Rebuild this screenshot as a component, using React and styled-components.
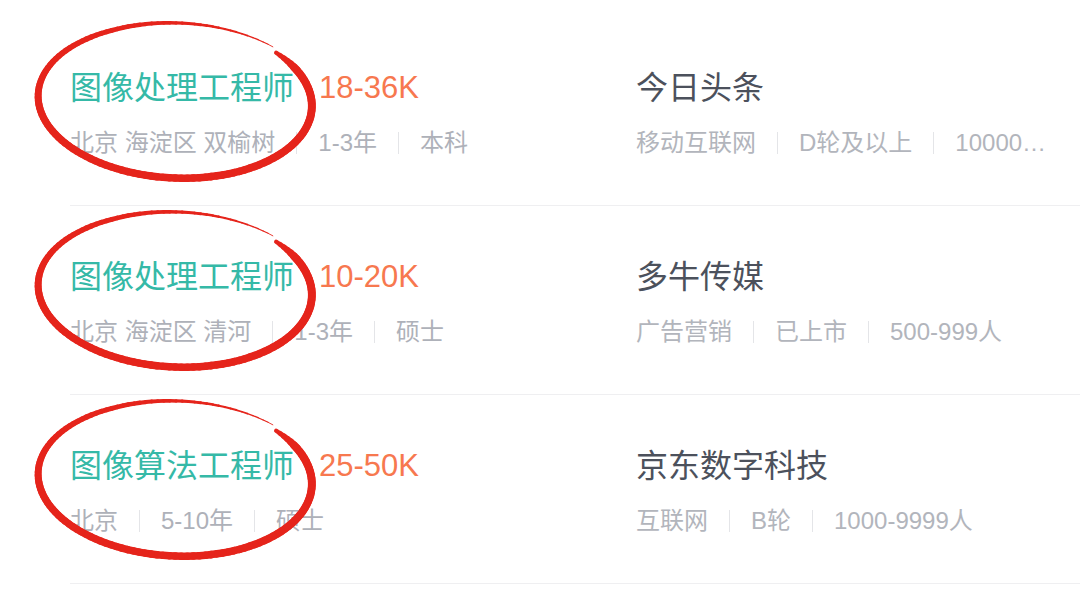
import React from 'react';
import styled, { createGlobalStyle } from 'styled-components';

const GlobalStyle = createGlobalStyle`
  html, body {
    margin: 0;
    padding: 0;
    background: #ffffff;
  }
  body {
    font-family: "Liberation Sans", "Noto Sans CJK SC", sans-serif;
    -webkit-font-smoothing: antialiased;
  }
`;

const Page = styled.div`
  width: 1080px;
  height: 616px;
  overflow: hidden;
  background: #ffffff;
`;

const List = styled.ul`
  list-style: none;
  margin: 17px 0 0;
  padding: 0;
`;

const Row = styled.li`
  position: relative;
  display: flex;
  margin-left: 70px;
  padding: 51px 0 46px;
  border-bottom: 1px solid #efeff1;
`;

const JobCol = styled.div`
  width: 566px;
  display: flex;
  flex-direction: column;
  gap: 19px;
`;

const CompanyCol = styled.div`
  flex: 1;
  display: flex;
  flex-direction: column;
  gap: 19px;
`;

const TitleLine = styled.div`
  display: flex;
  align-items: center;
  gap: 25px;
  height: 40px;
`;

const JobTitle = styled.span`
  font-size: 32px;
  line-height: 40px;
  color: #35b9a7;
`;

const Salary = styled.span`
  font-size: 31px;
  line-height: 40px;
  color: #f7784f;
`;

const CompanyName = styled.span`
  font-size: 32px;
  line-height: 40px;
  color: #4c515c;
`;

const Meta = styled.div`
  display: flex;
  align-items: center;
  height: 32px;
  max-width: ${(p) => (p.$max ? `${p.$max}px` : 'none')};
  font-size: 24px;
  line-height: 32px;
  color: ${(p) => p.$tone || '#aeb1b9'};
  white-space: nowrap;
`;

const MetaItem = styled.span`
  flex: 0 0 auto;

  &:last-child {
    flex: 0 1 auto;
    min-width: 0;
    overflow: hidden;
    text-overflow: ellipsis;
  }
`;

const Sep = styled.span`
  flex: 0 0 auto;
  width: 1px;
  height: 22px;
  margin: 0 21px;
  background: #e4e5e8;
`;

const Mark = styled.svg`
  position: absolute;
  left: -70px;
  top: 0;
  pointer-events: none;
  overflow: visible;
`;

const jobs = [
  {
    title: '图像处理工程师',
    salary: '18-36K',
    meta: ['北京 海淀区 双榆树', '1-3年', '本科'],
    company: '今日头条',
    info: ['移动互联网', 'D轮及以上', '10000人以上'],
  },
  {
    title: '图像处理工程师',
    salary: '10-20K',
    meta: ['北京 海淀区 清河', '1-3年', '硕士'],
    company: '多牛传媒',
    info: ['广告营销', '已上市', '500-999人'],
  },
  {
    title: '图像算法工程师',
    salary: '25-50K',
    meta: ['北京', '5-10年', '硕士'],
    company: '京东数字科技',
    info: ['互联网', 'B轮', '1000-9999人'],
  },
];

// hand drawn red ring: short segments along an ellipse, width tapering at the end
const ringSegments = () => {
  const cx = 175;
  const cy = 84;
  const rx = 137;
  const ry = 77;
  const rot = (3 * Math.PI) / 180;
  const start = (-44 * Math.PI) / 180;
  const sweep = (356 * Math.PI) / 180;
  const steps = 140;
  const width = (t) => {
    if (t < 0.04) return 4 + (t / 0.04) * 4;
    if (t < 0.6) return 8 - (t / 0.6) * 0.8;
    if (t < 0.82) return 7.2 - ((t - 0.6) / 0.22) * 2.6;
    return Math.max(0.8, 4.6 - ((t - 0.82) / 0.18) * 3.8);
  };
  const point = (t) => {
    const a = start + sweep * t;
    const grow = 1 + 0.035 * Math.max(0, (t - 0.8) / 0.2);
    const x0 = rx * grow * Math.cos(a);
    const y0 = ry * grow * Math.sin(a);
    return [
      cx + x0 * Math.cos(rot) - y0 * Math.sin(rot),
      cy + x0 * Math.sin(rot) + y0 * Math.cos(rot),
    ];
  };
  const out = [];
  for (let i = 0; i < steps; i++) {
    const t0 = i / steps;
    const t1 = (i + 1) / steps;
    const [x1, y1] = point(t0);
    const [x2, y2] = point(t1);
    out.push({ x1, y1, x2, y2, w: width((t0 + t1) / 2) });
  }
  return out;
};

const segments = ringSegments();

const Ring = () => (
  <Mark width="360" height="190" viewBox="0 0 360 190">
    {segments.map((s, i) => (
      <line
        key={i}
        x1={s.x1}
        y1={s.y1}
        x2={s.x2}
        y2={s.y2}
        stroke="#e5241b"
        strokeWidth={s.w}
        strokeLinecap="round"
      />
    ))}
  </Mark>
);

const MetaLine = ({ items, ...rest }) => (
  <Meta {...rest}>
    {items.map((item, i) => (
      <React.Fragment key={i}>
        {i > 0 && <Sep />}
        <MetaItem>{item}</MetaItem>
      </React.Fragment>
    ))}
  </Meta>
);

export default function App() {
  return (
    <Page>
      <GlobalStyle />
      <List>
        {jobs.map((job, i) => (
          <Row key={i}>
            <JobCol>
              <TitleLine>
                <JobTitle>{job.title}</JobTitle>
                <Salary>{job.salary}</Salary>
              </TitleLine>
              <MetaLine items={job.meta} />
            </JobCol>
            <CompanyCol>
              <TitleLine>
                <CompanyName>{job.company}</CompanyName>
              </TitleLine>
              <MetaLine items={job.info} $max={418} $tone="#b2b5bc" />
            </CompanyCol>
            <Ring />
          </Row>
        ))}
      </List>
    </Page>
  );
}
